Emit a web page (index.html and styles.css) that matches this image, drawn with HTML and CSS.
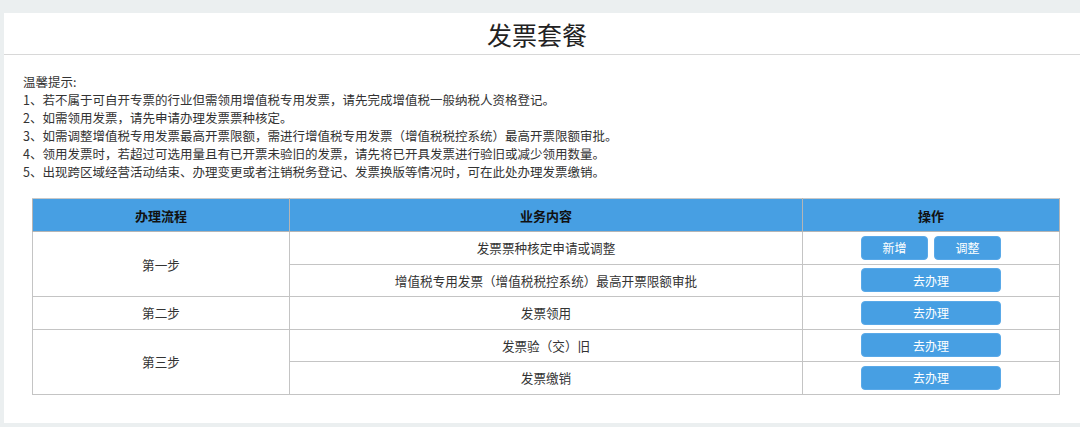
FILE: index.html
```html
<!DOCTYPE html>
<html lang="zh-CN">
<head>
<meta charset="utf-8">
<title>发票套餐</title>
<link rel="stylesheet" href="styles.css">
</head>
<body>
<div class="panel">
  <div class="head"><h1 class="title">发票套餐</h1></div>
  <div class="tips">
    <p>温馨提示:</p>
    <p>1、若不属于可自开专票的行业但需领用增值税专用发票，请先完成增值税一般纳税人资格登记。</p>
    <p>2、如需领用发票，请先申请办理发票票种核定。</p>
    <p>3、如需调整增值税专用发票最高开票限额，需进行增值税专用发票（增值税税控系统）最高开票限额审批。</p>
    <p>4、领用发票时，若超过可选用量且有已开票未验旧的发票，请先将已开具发票进行验旧或减少领用数量。</p>
    <p>5、出现跨区域经营活动结束、办理变更或者注销税务登记、发票换版等情况时，可在此处办理发票缴销。</p>
  </div>
  <table class="grid">
    <thead>
      <tr><th class="c1">办理流程</th><th class="c2">业务内容</th><th class="c3">操作</th></tr>
    </thead>
    <tbody>
      <tr>
        <td rowspan="2">第一步</td>
        <td>发票票种核定申请或调整</td>
        <td><div class="ops"><button class="btn small">新增</button><button class="btn small">调整</button></div></td>
      </tr>
      <tr>
        <td>增值税专用发票（增值税税控系统）最高开票限额审批</td>
        <td><div class="ops"><button class="btn">去办理</button></div></td>
      </tr>
      <tr>
        <td>第二步</td>
        <td>发票领用</td>
        <td><div class="ops"><button class="btn">去办理</button></div></td>
      </tr>
      <tr>
        <td rowspan="2">第三步</td>
        <td>发票验（交）旧</td>
        <td><div class="ops"><button class="btn">去办理</button></div></td>
      </tr>
      <tr>
        <td>发票缴销</td>
        <td><div class="ops"><button class="btn">去办理</button></div></td>
      </tr>
    </tbody>
  </table>
</div>
</body>
</html>
```
FILE: styles.css
```css
html, body {
  margin: 0;
  padding: 0;
  background: #ebeff0;
  height: 427px;
  overflow: hidden;
}
body {
  padding: 13px 0 0 4px;
  box-sizing: border-box;
  font-family: "Microsoft YaHei", "Noto Sans CJK SC", sans-serif;
  color: #333;
}
.panel {
  background: #fff;
  height: 410px;
  width: 1076px;
  box-sizing: border-box;
}
.head {
  height: 41px;
  border-bottom: 1px solid #d8d8d8;
  display: flex;
  align-items: center;
  justify-content: center;
  padding-right: 10px;
}
.title {
  margin: 0;
  font-size: 25px;
  font-weight: normal;
  color: #222;
  line-height: 1;
  padding-top: 2px;
}
.tips {
  padding: 18px 0 0 19px;
  font-size: 12.5px;
  line-height: 18px;
  color: #333;
}
.tips p {
  margin: 0;
}
.grid {
  margin: 17px 0 0 28px;
  width: 1028px;
  border-collapse: collapse;
  table-layout: fixed;
  font-size: 12.6px;
  color: #333;
  border: 1px solid #c4c4c4;
}
.grid th {
  background: #479fe3;
  color: #111;
  font-weight: bold;
  font-size: 13px;
  height: 32px;
  padding: 0;
  border: 1px solid #b5b5b5;
  border-top: 1px solid #c8c8c8;
}
.c1 { width: 25%; }
.c2 { width: 50%; }
.c3 { width: 25%; }
.grid td {
  height: 31.5px;
  padding: 0;
  text-align: center;
  border: 1px solid #c4c4c4;
}
.ops {
  display: flex;
  justify-content: center;
  gap: 6px;
}
.btn {
  font-family: inherit;
  font-size: 12px;
  color: #fff;
  background: #479fe3;
  border: 1px solid #5aa9e8;
  border-radius: 4px;
  height: 24px;
  width: 140px;
  padding: 0;
  cursor: pointer;
}
.btn.small {
  width: 67px;
}
```
